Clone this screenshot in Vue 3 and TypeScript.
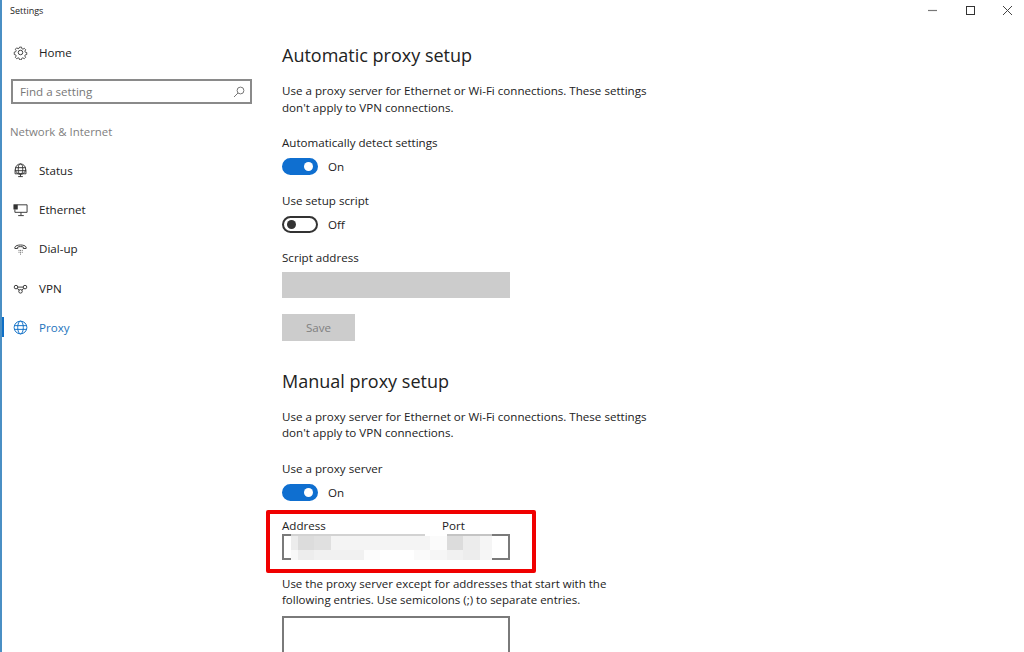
<script setup lang="ts">
interface NavItem { label: string; icon: string; active?: boolean }
interface Cell { w: number; c: string }
const nav: NavItem[] = [
  { label: 'Status', icon: 'status' },
  { label: 'Ethernet', icon: 'ethernet' },
  { label: 'Dial-up', icon: 'dialup' },
  { label: 'VPN', icon: 'vpn' },
  { label: 'Proxy', icon: 'proxy', active: true },
]
const mosaicRows: { cls: string; cells: Cell[] }[] = [
  {
    cls: 'line',
    cells: [
      { w: 134, c: '#d2d2d2' }, { w: 22, c: '#ffffff' }, { w: 45, c: '#c4c4c4' },
    ],
  },
  {
    cls: 'top',
    cells: [
      { w: 7, c: '#ececec' }, { w: 16, c: '#dcdcdc' }, { w: 17, c: '#e0e0e0' }, { w: 99, c: '#f4f4f4' },
      { w: 17, c: '#fbfbfb' }, { w: 16, c: '#dcdcdc' }, { w: 17, c: '#ececec' }, { w: 12, c: '#f5f5f5' },
    ],
  },
  {
    cls: 'bottom',
    cells: [
      { w: 7, c: '#f8f8f8' }, { w: 16, c: '#ededed' }, { w: 50, c: '#f1f1f1' }, { w: 16, c: '#fcfcfc' },
      { w: 34, c: '#ffffff' }, { w: 16, c: '#fafafa' }, { w: 17, c: '#f6f6f6' }, { w: 16, c: '#f1f1f1' },
      { w: 17, c: '#ededed' }, { w: 12, c: '#f6f6f6' },
    ],
  },
]
</script>

<template>
  <div class="window">
    <header class="titlebar">
      <span class="title">Settings</span>
      <div class="controls">
        <svg width="37" height="20" viewBox="0 0 37 20"><path d="M0 10.500h9" stroke="#777" stroke-width="1.200" fill="none"/></svg>
        <svg width="37" height="20" viewBox="0 0 37 20"><rect x="1.500" y="6.500" width="8" height="8" stroke="#333" fill="none"/></svg>
        <svg width="22" height="20" viewBox="0 0 22 20"><path d="M1 6l9 9M10 6l-9 9" stroke="#444" fill="none"/></svg>
      </div>
    </header>
    <div class="body">
      <aside class="sidebar">
        <div class="home">
          <svg class="icon" viewBox="0 0 16 16" fill="none" stroke="#333" stroke-width="1">
            <circle cx="8" cy="8" r="2.400"/>
            <path d="M6.800 1.500h2.400l.4 1.900 1.300.6 1.700-1 1.600 1.700-1 1.600.6 1.400 1.700.4v2.300l-1.800.4-.6 1.300 1 1.700-1.600 1.600-1.700-1-1.300.5-.4 1.800H6.800l-.4-1.800-1.300-.5-1.700 1-1.600-1.600 1-1.700-.6-1.300-1.700-.4V7.500l1.700-.4.6-1.400-1-1.600 1.600-1.700 1.700 1 1.300-.6z" transform="translate(.9 .9) scale(.89)"/>
          </svg>
          <span>Home</span>
        </div>
        <div class="search">
          <span>Find a setting</span>
          <svg width="12" height="12" viewBox="0 0 12 12" fill="none" stroke="#777"><circle cx="7.500" cy="4.500" r="3.400"/><path d="M5 7l-4 4"/></svg>
        </div>
        <div class="group">Network &amp; Internet</div>
        <nav class="nav">
          <div v-for="item in nav" :key="item.label" class="nav-item" :class="{ active: item.active }">
            <svg class="icon" viewBox="0 0 16 16" fill="none" :stroke="item.active ? '#0f6fc6' : '#333'" stroke-width="1">
              <template v-if="item.icon === 'status'">
                <circle cx="8" cy="6.500" r="5.500"/><ellipse cx="8" cy="6.500" rx="2.400" ry="5.500"/>
                <path d="M2.500 5h11M2.500 8.200h11"/><path d="M2.200 7v4.500h11.600V7M8 11.500v3M5.500 14.500h5"/>
              </template>
              <template v-else-if="item.icon === 'ethernet'">
                <path d="M4.500 3h10.500v8H2V8"/><rect x="1" y="3" width="3.500" height="4.500" fill="#333"/><path d="M8.500 11v3M5.500 14.500h6"/>
              </template>
              <template v-else-if="item.icon === 'dialup'">
                <path d="M2 8V6.500c1.500-3 10.500-3 12 0V8h-3V6.500c-1-.7-5-.7-6 0V8z"/>
                <path d="M6 10h.8M7.700 10h.8M9.400 10h.8M6 12h.8M7.700 12h.8M9.400 12h.8M7.700 14h.8"/>
              </template>
              <template v-else-if="item.icon === 'vpn'">
                <circle cx="3.200" cy="6.500" r="1.900"/><circle cx="12.800" cy="6.500" r="1.900"/><circle cx="8" cy="11" r="1.900"/>
                <path d="M5 6.500h6M4.500 8l2.200 1.600M11.500 8l-2.200 1.600"/>
              </template>
              <template v-else>
                <circle cx="8" cy="8" r="6.800"/><ellipse cx="8" cy="8" rx="3" ry="6.800"/><path d="M1.500 6h13M1.500 10h13"/>
              </template>
            </svg>
            <span>{{ item.label }}</span>
          </div>
        </nav>
      </aside>

      <main class="main">
        <h2 class="heading first">Automatic proxy setup</h2>
        <p class="para">Use a proxy server for Ethernet or Wi-Fi connections. These settings<br>don't apply to VPN connections.</p>
        <div class="label l-detect">Automatically detect settings</div>
        <div class="toggle-row"><span class="toggle on"><i></i></span><span>On</span></div>
        <div class="label l-script">Use setup script</div>
        <div class="toggle-row"><span class="toggle"><i></i></span><span>Off</span></div>
        <div class="label l-addr">Script address</div>
        <div class="disabled-input"></div>
        <div class="save">Save</div>
        <h2 class="heading second">Manual proxy setup</h2>
        <p class="para">Use a proxy server for Ethernet or Wi-Fi connections. These settings<br>don't apply to VPN connections.</p>
        <div class="label l-use">Use a proxy server</div>
        <div class="toggle-row"><span class="toggle on"><i></i></span><span>On</span></div>
        <div class="proxy-labels"><span class="addr">Address</span><span class="port">Port</span></div>
        <div class="address-box">
          <div class="mosaic">
            <div v-for="row in mosaicRows" :key="row.cls" class="m-row" :class="row.cls">
              <i v-for="(cell, n) in row.cells" :key="n" :style="{ width: cell.w + 'px', background: cell.c }"></i>
            </div>
          </div>
        </div>
        <p class="para exceptions">Use the proxy server except for addresses that start with the<br>following entries. Use semicolons (;) to separate entries.</p>
        <div class="exceptions-box"></div>
        <div class="highlight"></div>
      </main>
    </div>
  </div>
</template>

<style>
html, body { margin: 0; background: #fff; overflow: hidden; }
</style>

<style scoped>
.window {
  position: relative;
  width: 1024px;
  height: 652px;
  overflow: hidden;
  box-sizing: border-box;
  border-left: 2px solid #4a8fc4;
  background: #fff;
  color: #222;
  font-family: "Open Sans", "Noto Sans", sans-serif;
  font-size: 11.600px;
}
.titlebar {
  height: 20px;
  display: flex;
  align-items: center;
  justify-content: space-between;
}
.title { font-size: 9px; margin-left: 8px; color: #222; }
.controls { display: flex; }
.body { display: flex; }
.sidebar { width: 268px; flex: none; }
.icon { width: 15px; height: 15px; flex: none; }
.home {
  display: flex;
  align-items: center;
  gap: 11px;
  height: 20px;
  margin-top: 22px;
  padding-left: 11px;
}
.search {
  box-sizing: border-box;
  width: 241px;
  height: 25px;
  margin: 17px 0 0 9px;
  border: 2px solid #8a8a8a;
  display: flex;
  align-items: center;
  justify-content: space-between;
  padding: 0 5px 0 7px;
  color: #777;
}
.group {
  margin: 19px 0 0 8px;
  height: 18px;
  line-height: 18px;
  color: #808080;
  font-size: 11.400px;
}
.nav { margin-top: 10px; }
.nav-item {
  position: relative;
  display: flex;
  align-items: center;
  gap: 11px;
  height: 39.200px;
  padding-left: 11px;
}
.nav-item.active { color: #1e74bd; }
.nav-item.active::before {
  content: "";
  position: absolute;
  left: 0;
  top: 9px;
  width: 2px;
  height: 20px;
  background: #0f6fc6;
}
.main { position: relative; flex: 1; padding-left: 12px; }
.heading { margin: 0; font-weight: 400; font-size: 18px; height: 26px; line-height: 26px; color: #222; }
.heading.first { margin-top: 22px; }
.heading.second { margin-top: 27px; }
.para { margin: 0; line-height: 16.500px; color: #222; }
.heading + .para { margin-top: 15px; }
.label { height: 17px; line-height: 17px; }
.l-detect { margin-top: 18px; }
.l-script { margin-top: 17px; }
.l-addr { margin-top: 16px; }
.l-use { margin-top: 18px; }
.toggle-row {
  display: flex;
  align-items: center;
  gap: 10px;
  height: 17px;
  margin-top: 7px;
}
.toggle {
  box-sizing: border-box;
  width: 36px;
  height: 17px;
  border-radius: 9px;
  border: 2px solid #333;
  display: flex;
  align-items: center;
  padding: 0 3px;
}
.toggle i { width: 9px; height: 9px; border-radius: 50%; background: #333; }
.toggle.on { background: #0f6fd0; border-color: #0f6fd0; justify-content: flex-end; }
.toggle.on i { background: #fff; }
.disabled-input { width: 228px; height: 26px; background: #cccccc; margin-top: 5.500px; }
.save {
  width: 73px;
  height: 27px;
  line-height: 27px;
  margin-top: 16px;
  text-align: center;
  background: #cccccc;
  color: #808080;
}
.proxy-labels { display: flex; margin-top: 16px; height: 17px; line-height: 17px; }
.addr { width: 160px; }
.address-box {
  position: relative;
  box-sizing: border-box;
  width: 228px;
  height: 26px;
  border: 2px solid #7a7a7a;
}
.mosaic {
  position: absolute;
  left: 7px;
  top: -2px;
  width: 201px;
  height: 26px;
  display: flex;
  flex-direction: column;
  background: #fff;
}
.m-row { display: flex; }
.m-row.line { height: 2px; }
.m-row.top { height: 14px; }
.m-row.bottom { height: 10px; }
.m-row i { display: block; height: 100%; flex: none; }
.exceptions { margin-top: 16px; font-size: 11.500px; }
.exceptions-box {
  box-sizing: border-box;
  width: 228px;
  height: 60px;
  margin-top: 7px;
  border: 2px solid #7a7a7a;
}
.highlight {
  position: absolute;
  left: -4px;
  top: 490px;
  width: 270px;
  height: 63px;
  box-sizing: border-box;
  border: 4.500px solid #f00000;
  border-radius: 2px;
}
</style>
